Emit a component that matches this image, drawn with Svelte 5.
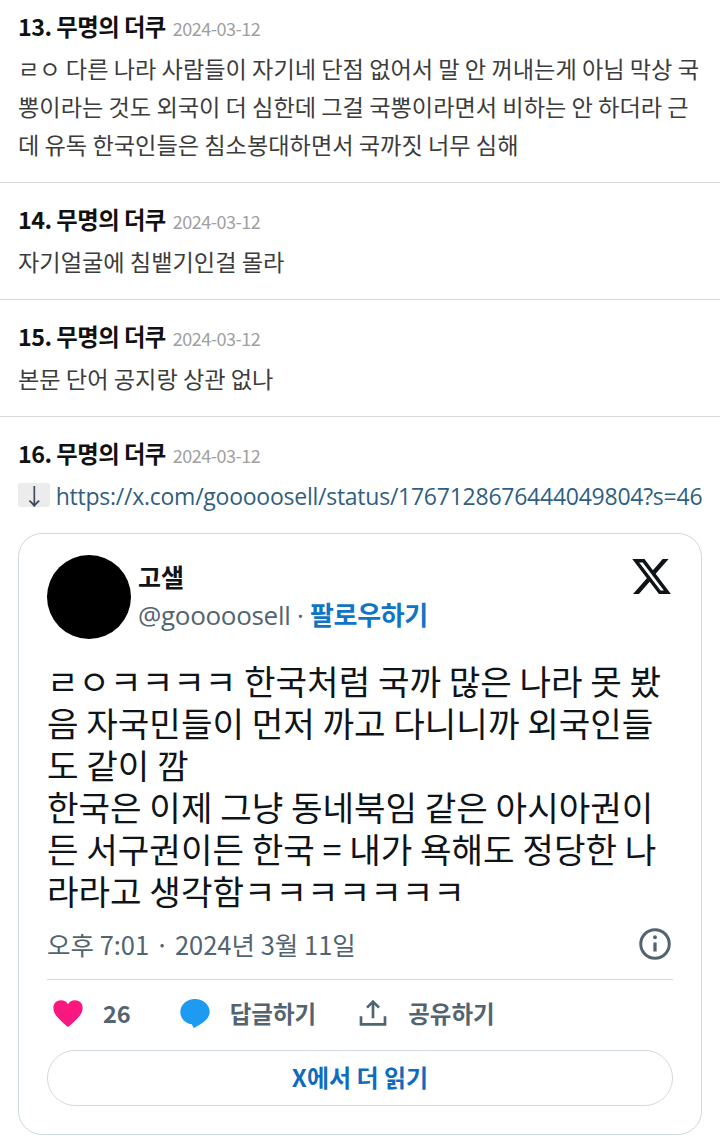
<script>
  const comments = [
    { no: 13, text: "ㄹㅇ 다른 나라 사람들이 자기네 단점 없어서 말 안 꺼내는게 아님 막상 국뽕이라는 것도 외국이 더 심한데 그걸 국뽕이라면서 비하는 안 하더라 근데 유독 한국인들은 침소봉대하면서 국까짓 너무 심해" },
    { no: 14, text: "자기얼굴에 침뱉기인걸 몰라" },
    { no: 15, text: "본문 단어 공지랑 상관 없나" },
  ];
  const date = "2024-03-12";
  const nick = "무명의 더쿠";
</script>

<main>
  {#each comments as c}
    <section class="item">
      <div class="head"><b>{c.no}. {nick}</b><span class="date">{date}</span></div>
      <p class="body">{c.text}</p>
    </section>
  {/each}

  <section class="item last">
    <div class="head"><b>16. {nick}</b><span class="date">{date}</span></div>
    <p class="link"><span class="arrow">↓</span> <a href="#top">https://x.com/gooooosell/status/1767128676444049804?s=46</a></p>

    <div class="tweet">
      <div class="author">
        <div class="avatar"></div>
        <div class="names">
          <div class="name">고샐</div>
          <div class="handle">@gooooosell · <span class="follow">팔로우하기</span></div>
        </div>
        <svg class="xlogo" viewBox="0 0 24 24" width="43" height="43">
          <path fill="#0f1419" d="M18.24 2.25h3.31l-7.23 8.26 8.5 11.24H16.17l-5.21-6.82L4.99 21.75H1.68l7.73-8.84L1.25 2.25H8.08l4.71 6.23zm-1.16 17.52h1.83L7.08 4.13H5.12z"/>
        </svg>
      </div>

      <p class="tweet-text">ㄹㅇㅋㅋㅋㅋ 한국처럼 국까 많은 나라 못 봤음 자국민들이 먼저 까고 다니니까 외국인들도 같이 깜<br />한국은 이제 그냥 동네북임 같은 아시아권이든 서구권이든 한국 = 내가 욕해도 정당한 나라라고 생각함ㅋㅋㅋㅋㅋㅋㅋ</p>

      <div class="time">
        <span>오후 7:01 · 2024년 3월 11일</span>
        <svg viewBox="0 0 24 24" width="36" height="36" fill="none" stroke="#536471" stroke-width="2">
          <circle cx="12" cy="12" r="9.500" />
          <path d="M12 11v6" stroke-width="2.200" />
          <circle cx="12" cy="7.500" r="1.300" fill="#536471" stroke="none" />
        </svg>
      </div>

      <div class="actions">
        <span class="action heart">
          <svg viewBox="0 0 24 24" width="32" height="32"><path fill="#f91880" d="M12 22.500C8 19 1 14 1 8.200 1 4.800 3.500 2.500 6.800 2.500c2.200 0 4.200 1.200 5.200 3 1-1.800 3-3 5.200-3 3.300 0 5.800 2.300 5.800 5.700C23 14 16 19 12 22.500z"/></svg>
          <span class="count">26</span>
        </span>
        <span class="action reply">
          <svg viewBox="0 0 24 24" width="32" height="32"><path fill="#1d9bf0" d="M12 1.500C5.800 1.500 1 5.700 1 11.300c0 5.200 4.500 8.900 8.600 9.200l1.400 2.700c5-2.200 12-6.400 12-11.900C23 5.700 18.200 1.500 12 1.500z"/></svg>
          <span>답글하기</span>
        </span>
        <span class="action share">
          <svg viewBox="0 0 24 24" width="32" height="32" fill="none" stroke="#536471" stroke-width="2"><path d="M12 16V3.500M7.500 8L12 3.500 16.500 8M3 14.500v6h18v-6"/></svg>
          <span>공유하기</span>
        </span>
      </div>

      <div class="more">X에서 더 읽기</div>
    </div>
  </section>
</main>

<style>
  :global(body) {
    margin: 0;
    background: #fff;
  }

  main {
    width: 720px;
    font-family: "Noto Sans CJK KR", "Noto Sans", sans-serif;
    color: #333;
    overflow: hidden;
  }

  .item {
    padding: 20px 18px 19px;
    border-bottom: 1px solid #d9d9d9;
  }

  .item:first-child {
    padding-top: 10px;
  }

  .item.last {
    border-bottom: none;
    padding-bottom: 10px;
  }

  .head {
    display: flex;
    align-items: baseline;
    gap: 7px;
    height: 32px;
    line-height: 32px;
    letter-spacing: -0.5px;
  }

  .head b {
    font-size: 23.300px;
    font-weight: 700;
    color: #111;
  }

  .date {
    font-size: 18px;
    color: #a0a0a0;
  }

  .body {
    margin: 7px 0 0;
    font-size: 23.200px;
    line-height: 38px;
    color: #3c3c3c;
  }

  .link {
    margin: 8px 0 0;
    font-family: "Open Sans", "Noto Sans", sans-serif;
    font-size: 23px;
    line-height: 38px;
    white-space: nowrap;
    letter-spacing: -0.25px;
  }

  .arrow {
    display: inline-block;
    width: 32px;
    height: 24px;
    line-height: 24px;
    background: #ececec;
    border-radius: 2px;
    text-align: center;
    color: #444;
    font-family: "Noto Sans CJK KR", sans-serif;
  }

  a {
    color: #2f5f82;
    text-decoration: none;
  }

  .tweet {
    margin-top: 18px;
    border: 1px solid #cfd9de;
    border-radius: 24px;
    padding: 21px 28px 28px;
  }

  .author {
    display: flex;
    align-items: flex-start;
  }

  .avatar {
    width: 84px;
    height: 84px;
    border-radius: 50%;
    background: #000;
    flex: none;
  }

  .names {
    flex: 1;
    margin-left: 7px;
  }

  .name {
    font-size: 25px;
    font-weight: 700;
    color: #0f1419;
    line-height: 42px;
  }

  .handle {
    font-family: "Open Sans", "Noto Sans CJK KR", sans-serif;
    font-size: 26px;
    color: #536471;
    line-height: 32px;
    margin-top: 1px;
    letter-spacing: -0.3px;
  }

  .follow {
    font-family: "Noto Sans CJK KR", sans-serif;
    font-weight: 700;
    color: #0f75c4;
  }

  .tweet-text {
    margin: 20px 0 0;
    font-size: 34.300px;
    line-height: 42px;
    color: #0f1419;
  }

  .time {
    display: flex;
    justify-content: space-between;
    align-items: center;
    margin-top: 14px;
    font-size: 25.500px;
    color: #536471;
    padding-bottom: 17px;
    border-bottom: 1px solid #cfd9de;
  }

  .actions {
    display: flex;
    align-items: center;
    height: 66px;
    padding-bottom: 4px;
    font-size: 23.500px;
    font-weight: 700;
    color: #536471;
  }

  .action {
    display: flex;
    align-items: center;
    gap: 19px;
  }

  .heart {
    margin-left: 5px;
  }

  .reply {
    margin-left: 48px;
  }

  .share {
    margin-left: 41px;
  }

  .more {
    height: 54px;
    line-height: 52px;
    text-align: center;
    border: 1px solid #cfd9de;
    border-radius: 28px;
    font-size: 24px;
    font-weight: 700;
    color: #0f6cbd;
  }
</style>
